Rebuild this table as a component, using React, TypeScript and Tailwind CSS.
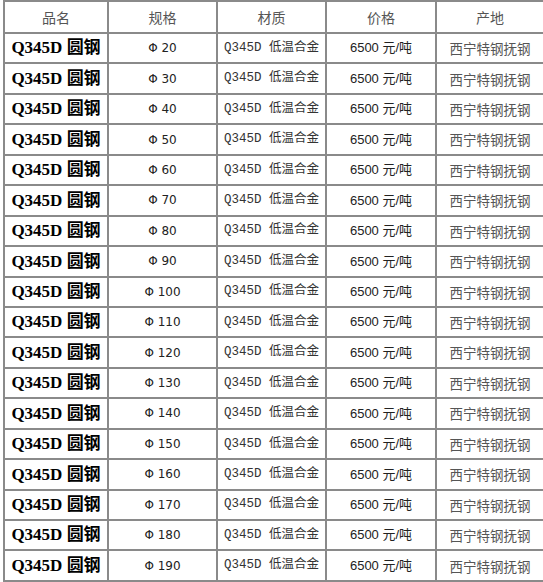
const sizes = [20, 30, 40, 50, 60, 70, 80, 90, 100, 110, 120, 130, 140, 150, 160, 170, 180, 190]

const serif = 'font-["Liberation_Serif","Noto_Sans_CJK_SC",serif]'

function App() {
  return (
    <div className="h-[582px] w-[543px] overflow-hidden bg-white pl-[3px]">
      <table className="w-[540px] table-fixed border-collapse text-center">
        <colgroup>
          <col className="w-[104px]" />
          <col className="w-[109px]" />
          <col className="w-[109px]" />
          <col className="w-[110px]" />
          <col className="w-[108px]" />
        </colgroup>
        <thead>
          <tr className="h-[32px] font-['Noto_Sans_CJK_SC',sans-serif] text-[14px] text-[#555]">
            <th className="border-2 border-[#8a8a8a] font-normal">品名</th>
            <th className="border-2 border-[#8a8a8a] font-normal">规格</th>
            <th className="border-2 border-[#8a8a8a] font-normal">材质</th>
            <th className="border-2 border-[#8a8a8a] font-normal">价格</th>
            <th className="border-2 border-[#8a8a8a] font-normal">产地</th>
          </tr>
        </thead>
        <tbody>
          {sizes.map((s) => (
            <tr key={s} className="h-[30.45px]">
              <td className={`border-2 border-[#8a8a8a] ${serif} text-[17px] font-bold text-black`}>
                Q345D 圆钢
              </td>
              <td className="border-2 border-[#8a8a8a] font-['DejaVu_Sans',sans-serif] text-[12px] text-[#222]">
                Φ {s}
              </td>
              <td className="border-2 border-[#8a8a8a] pl-[6px] text-left font-['Liberation_Mono','Noto_Sans_CJK_SC',monospace] text-[12.5px] text-[#333]">
                Q345D 低温合金
              </td>
              <td className="border-2 border-[#8a8a8a] font-['Liberation_Sans','Noto_Sans_CJK_SC',sans-serif] text-[13px] text-[#222]">
                6500 元/吨
              </td>
              <td className="border-2 border-[#8a8a8a] font-['Noto_Sans_CJK_SC',sans-serif] text-[13.5px] text-[#555]">
                西宁特钢抚钢
              </td>
            </tr>
          ))}
        </tbody>
      </table>
    </div>
  )
}

export default App
